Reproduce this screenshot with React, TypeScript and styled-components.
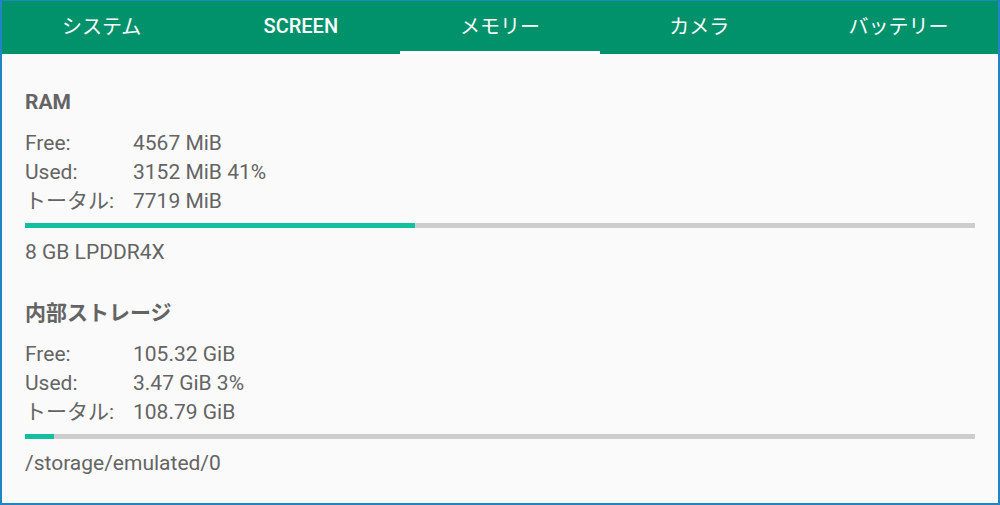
import styled, { createGlobalStyle } from "styled-components"

const GlobalStyle = createGlobalStyle`
  html, body {
    margin: 0;
    padding: 0;
    background: #ffffff;
  }
  * {
    box-sizing: border-box;
  }
`

const tabs = ["システム", "SCREEN", "メモリー", "カメラ", "バッテリー"]
const activeTab = 2

type Row = { label: string; value: string }

const sections: { title: string; rows: Row[]; percent: number; footer: string }[] = [
  {
    title: "RAM",
    rows: [
      { label: "Free:", value: "4567 MiB" },
      { label: "Used:", value: "3152 MiB 41%" },
      { label: "トータル:", value: "7719 MiB" },
    ],
    percent: 41,
    footer: "8 GB LPDDR4X",
  },
  {
    title: "内部ストレージ",
    rows: [
      { label: "Free:", value: "105.32 GiB" },
      { label: "Used:", value: "3.47 GiB 3%" },
      { label: "トータル:", value: "108.79 GiB" },
    ],
    percent: 3,
    footer: "/storage/emulated/0",
  },
]

const App = () => {
  return (
    <>
      <GlobalStyle />
      <Frame>
        <TabBar>
          {tabs.map((tab, i) => (
            <Tab key={tab} $active={i === activeTab} $latin={/^[A-Z]+$/.test(tab)}>
              {tab}
            </Tab>
          ))}
        </TabBar>
        <Content>
          {sections.map((section) => (
            <Section key={section.title}>
              <SectionTitle>{section.title}</SectionTitle>
              <InfoTable>
                {section.rows.map((row) => (
                  <InfoRow key={row.label}>
                    <Label>{row.label}</Label>
                    <Value>{row.value}</Value>
                  </InfoRow>
                ))}
              </InfoTable>
              <Track>
                <Fill style={{ width: `${section.percent}%` }} />
              </Track>
              <Footer>{section.footer}</Footer>
            </Section>
          ))}
        </Content>
      </Frame>
    </>
  )
}

const Frame = styled.div`
  width: 1000px;
  height: 505px;
  border: 2px solid #2185c5;
  border-top-width: 1px;
  background: #fafafa;
  display: flex;
  flex-direction: column;
  overflow: hidden;
  font-family: Roboto, "Noto Sans CJK JP", sans-serif;
`

const TabBar = styled.div`
  display: flex;
  height: 53px;
  background: #02926b;
  flex-shrink: 0;
`

const Tab = styled.div<{ $active?: boolean; $latin?: boolean }>`
  flex: 1;
  display: flex;
  align-items: center;
  justify-content: center;
  padding-bottom: 1px;
  color: #ffffff;
  font-size: 20px;
  font-weight: ${(p) => (p.$latin ? 500 : 400)};
  border-bottom: 3px solid ${(p) => (p.$active ? "#ffffff" : "transparent")};
`

const Content = styled.div`
  padding: 36px 23px 0 23px;
  display: flex;
  flex-direction: column;
  gap: 37px;
`

const Section = styled.section`
  display: flex;
  flex-direction: column;
`

const SectionTitle = styled.h2`
  margin: 0 0 15px;
  font-size: 21px;
  line-height: 24px;
  font-weight: 700;
  color: #646464;
`

const InfoTable = styled.div`
  display: flex;
  flex-direction: column;
`

const InfoRow = styled.div`
  display: flex;
  font-size: 21px;
  line-height: 29px;
  color: #646464;
`

const Label = styled.span`
  width: 108px;
`

const Value = styled.span``

const Track = styled.div`
  margin-top: 7px;
  height: 5px;
  width: 950px;
  background: #cdcdcd;
`

const Fill = styled.div`
  height: 100%;
  background: #12c0a0;
`

const Footer = styled.div`
  margin-top: 12px;
  font-size: 21px;
  line-height: 24px;
  color: #646464;
`

export default App
